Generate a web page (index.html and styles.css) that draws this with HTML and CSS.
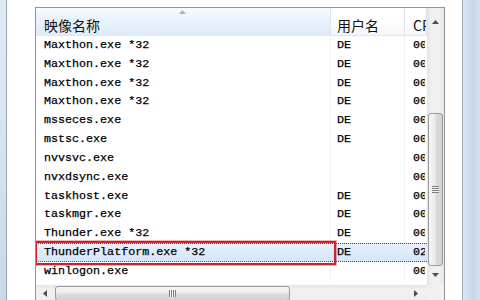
FILE: index.html
```html
<!DOCTYPE html>
<html lang="zh-CN">
<head>
    <meta charset="UTF-8">
    <title>任务管理器 - 进程</title>
    <link rel="stylesheet" href="styles.css">
</head>
<body>
    <div class="frame-left"></div>

    <div class="panel">
        <div class="listview">
            <div class="content">
                <div class="header">
                    <div class="head col-name sorted">
                        <svg class="sort-arrow" width="7" height="4" viewBox="0 0 7 4"><polygon points="0,4 3.5,0 7,4" fill="#a7b4c6"/></svg>
                        <span class="head-label">映像名称</span>
                    </div>
                    <div class="head col-user"><span class="head-label">用户名</span></div>
                    <div class="head col-cpu"><span class="head-label">CPU</span></div>
                </div>

                <div class="rows">
                    <div class="row"><span class="cell">Maxthon.exe *32</span><span class="cell">DE</span><span class="cell">00</span></div>
                    <div class="row"><span class="cell">Maxthon.exe *32</span><span class="cell">DE</span><span class="cell">00</span></div>
                    <div class="row"><span class="cell">Maxthon.exe *32</span><span class="cell">DE</span><span class="cell">00</span></div>
                    <div class="row"><span class="cell">Maxthon.exe *32</span><span class="cell">DE</span><span class="cell">00</span></div>
                    <div class="row"><span class="cell">msseces.exe</span><span class="cell">DE</span><span class="cell">00</span></div>
                    <div class="row"><span class="cell">mstsc.exe</span><span class="cell">DE</span><span class="cell">00</span></div>
                    <div class="row"><span class="cell">nvvsvc.exe</span><span class="cell"></span><span class="cell">00</span></div>
                    <div class="row"><span class="cell">nvxdsync.exe</span><span class="cell"></span><span class="cell">00</span></div>
                    <div class="row"><span class="cell">taskhost.exe</span><span class="cell">DE</span><span class="cell">00</span></div>
                    <div class="row"><span class="cell">taskmgr.exe</span><span class="cell">DE</span><span class="cell">00</span></div>
                    <div class="row"><span class="cell">Thunder.exe *32</span><span class="cell">DE</span><span class="cell">00</span></div>
                    <div class="row selected"><span class="cell marked">ThunderPlatform.exe *32<span class="mark"></span></span><span class="cell">DE</span><span class="cell">02</span></div>
                    <div class="row"><span class="cell">winlogon.exe</span><span class="cell"></span><span class="cell">00</span></div>
                </div>
            </div>

            <!-- vertical scrollbar -->
            <div class="vscroll">
                <div class="btn btn-up">
                    <svg width="7" height="4" viewBox="0 0 7 4"><polygon points="0,4 3.5,0 7,4" fill="#4d4d4d"/></svg>
                </div>
                <div class="vthumb"><span class="grip-v"></span></div>
                <div class="btn btn-down">
                    <svg width="7" height="4" viewBox="0 0 7 4"><polygon points="0,0 3.5,4 7,0" fill="#4d4d4d"/></svg>
                </div>
            </div>

            <!-- horizontal scrollbar -->
            <div class="hscroll">
                <div class="btn btn-left">
                    <svg width="4" height="7" viewBox="0 0 4 7"><polygon points="4,0 0,3.5 4,7" fill="#4d4d4d"/></svg>
                </div>
                <div class="hthumb"><span class="grip-h"></span></div>
                <div class="btn btn-right">
                    <svg width="4" height="7" viewBox="0 0 4 7"><polygon points="0,0 4,3.5 0,7" fill="#4d4d4d"/></svg>
                </div>
            </div>
            <div class="corner"></div>
        </div>
    </div>

    <div class="frame-right"></div>
</body>
</html>
```

FILE: styles.css
```css
/* Page */
body {
    margin: 0;
    width: 480px;
    height: 300px;
    overflow: hidden;
    display: flex;
    background: #ffffff;
    font-family: 'Liberation Mono', monospace;
}

/* window frames on both sides */
.frame-left {
    width: 6px;
    flex: none;
    background: linear-gradient(#e2ebf4, #c9d9e9);
    border-right: 1px solid #97a3af;
}

.frame-right {
    width: 17px;
    flex: none;
    background: linear-gradient(90deg, #dbe7f3, #c3d7ea 60%, #d4e3f1);
    border-left: 1px solid #a3adb7;
}

.panel {
    flex: 1;
    padding: 7px 17px 0 28px;
    background: #ffffff;
}

/* list view */
.listview {
    width: 408px;
    border: 1px solid #8e959e;
    display: grid;
    grid-template-columns: 391px 17px;
    grid-template-rows: 277px 17px;
    background: #ffffff;
}

.content {
    overflow: hidden;
}

.header {
    display: grid;
    grid-template-columns: 295px 74px 22px;
    height: 28px;
    border-bottom: 1px solid #dfe6ee;
    box-sizing: border-box;
}

.head {
    background: linear-gradient(#ffffff, #ffffff 45%, #f4f6f9);
    border-right: 1px solid #dfe4ea;
    font-family: 'Noto Sans CJK SC', 'Liberation Sans', sans-serif;
    font-size: 14px;
    line-height: 16px;
    color: #111111;
    padding-top: 9px;
    box-sizing: border-box;
    overflow: hidden;
    white-space: nowrap;
}

.head.sorted {
    display: flex;
    flex-direction: column;
    padding-top: 2px;
    background: linear-gradient(#f7fbfe, #eaf3fb 40%, #ddebf8);
}

.sort-arrow {
    align-self: center;
    margin-right: 2px;
}

.sorted .head-label {
    margin-top: 3px;
}

.head-label {
    padding-left: 8px;
}

.col-user .head-label {
    padding-left: 6px;
}

/* rows */
.row {
    display: grid;
    grid-template-columns: 295px 74px 20px;
    height: 18.83px;
    line-height: 19.5px;
    font-size: 11.7px;
    color: #000000;
    -webkit-text-stroke: 0.25px #000000;
    box-sizing: border-box;
}

.cell {
    padding-left: 8px;
    border-right: 1px solid #f1f1f1;
    white-space: nowrap;
    overflow: hidden;
}

.cell:nth-child(2) {
    padding-left: 6px;
}

.cell:nth-child(3) {
    border-right: none;
}

.row.selected {
    background: linear-gradient(#e6f0fb, #d6e6f9);
    border-top: 1px dotted #4a4a4a;
    border-bottom: 1px dotted #4a4a4a;
    line-height: 17.5px;
}

.row.selected .cell {
    border-right-color: transparent;
}

.cell.marked {
    position: relative;
    overflow: visible;
}

/* red annotation box over the selected name */
.mark {
    position: absolute;
    left: -1px;
    right: -6px;
    top: -3px;
    bottom: -3px;
    border: 2px solid #c8242b;
    box-shadow: 0 0 0 1px rgba(200, 36, 43, 0.35);
}

/* scrollbars */
.vscroll {
    display: flex;
    flex-direction: column;
    background: linear-gradient(90deg, #e4e4e4, #f0f0f0 25%, #f0f0f0 75%, #e7e7e7);
}

.btn {
    display: flex;
    align-items: center;
    justify-content: center;
    flex: none;
}

.btn-up {
    height: 17px;
    padding-top: 5px;
}

.btn-down {
    height: 17px;
    margin-top: auto;
    padding-bottom: 2px;
}

.vthumb {
    margin: 83px 1px 0 1px;
    height: 154px;
    border: 1px solid #9b9b9b;
    border-radius: 3px;
    box-sizing: border-box;
    background: linear-gradient(90deg, #f6f6f6, #ececec 45%, #dcdcdc 55%, #d2d2d2);
    display: flex;
    align-items: center;
    justify-content: center;
}

.grip-v {
    width: 7px;
    height: 7px;
    background: repeating-linear-gradient(#7e7e7e 0 1px, #f4f4f4 1px 2px);
}

.hscroll {
    display: flex;
    align-items: stretch;
    background: linear-gradient(#e4e4e4, #f0f0f0 25%, #f0f0f0 75%, #e7e7e7);
}

.btn-left {
    width: 17px;
}

.btn-right {
    width: 17px;
    margin-left: auto;
    margin-right: 3px;
}

.hthumb {
    margin: 1px 0 1px 2px;
    width: 235px;
    border: 1px solid #9b9b9b;
    border-radius: 3px;
    box-sizing: border-box;
    background: linear-gradient(#f6f6f6, #ececec 45%, #dcdcdc 55%, #d2d2d2);
    display: flex;
    align-items: center;
    justify-content: center;
}

.grip-h {
    width: 7px;
    height: 7px;
    background: repeating-linear-gradient(90deg, #7e7e7e 0 1px, #f4f4f4 1px 2px);
}

.corner {
    background: #f0f0f0;
}
```
